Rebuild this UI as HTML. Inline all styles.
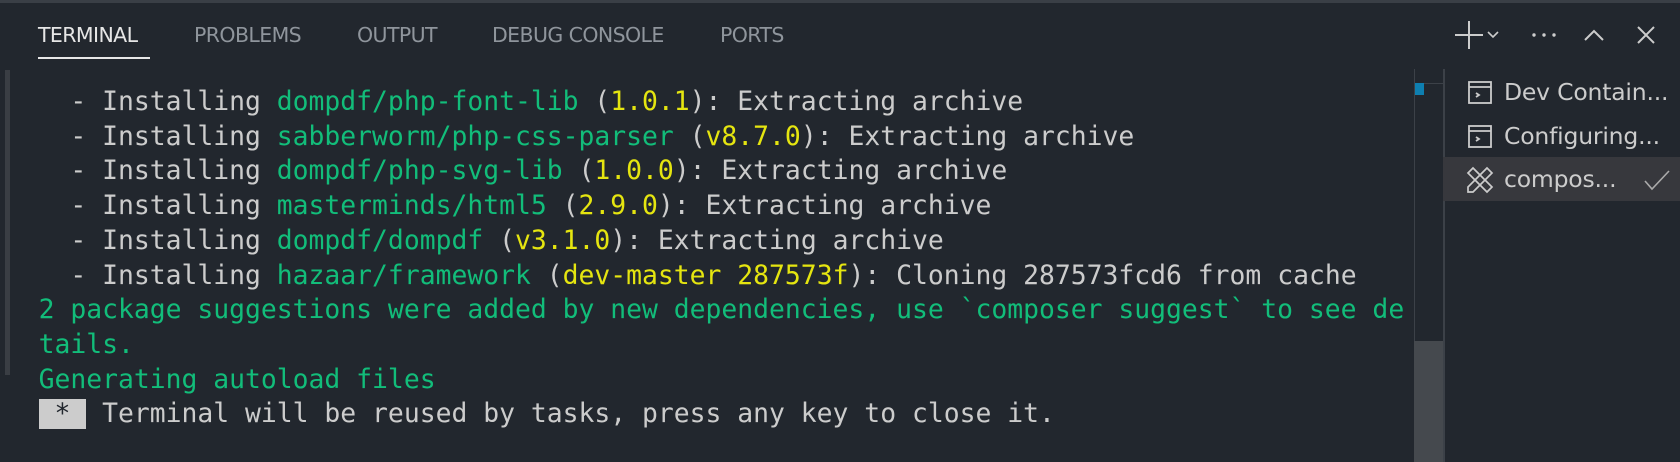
<!DOCTYPE html>
<html><head><style>
body{margin:0;width:1680px;height:462px;background:#22272e;overflow:hidden;position:relative;font-family:"Liberation Sans",sans-serif}
.top{position:absolute;left:0;top:0;width:1680px;height:3px;background:#3a3f46}
.tab{position:absolute;top:23px;font-family:"DejaVu Sans",sans-serif;font-size:20.5px;color:#8f959c;letter-spacing:-0.6px}
.act{color:#e6e6e6}
.ul{position:absolute;left:38px;top:57px;width:112px;height:2px;background:#e6e6e6}
.term{position:absolute;left:38.6px;top:85px;font-family:"DejaVu Sans Mono",monospace;font-size:26.38px;line-height:34.7px;color:#cccccc;white-space:pre}
.g{color:#12bd7a}.y{color:#e5e510}
.star{background:#cccccc;color:#22272e}
.lbar{position:absolute;left:5px;top:70px;width:5px;height:305px;background:#3a3e44}
.sb{position:absolute;left:1414px;top:69px;width:28px;height:393px;border-left:1px solid #3c4148;border-right:2px solid #3c4148}
.thumb{position:absolute;left:1414px;top:341px;width:29px;height:121px;background:#45494e}
.side{position:absolute;left:1443px;width:237px;height:44px;font-family:"DejaVu Sans",sans-serif;font-size:23.5px;color:#cccccc;line-height:44px;letter-spacing:-0.2px}
.side span{position:absolute;left:61px}
</style></head><body>
<div class="top"></div>
<div class="tab act" style="left:38px">TERMINAL</div>
<div class="tab" style="left:194px">PROBLEMS</div>
<div class="tab" style="left:357px">OUTPUT</div>
<div class="tab" style="left:492px">DEBUG CONSOLE</div>
<div class="tab" style="left:720px">PORTS</div>
<div class="ul"></div>
<svg style="position:absolute;left:1450px;top:18px" width="220" height="36" viewBox="0 0 220 36" fill="none" stroke="#cccccc" stroke-width="2">
<path d="M19 3V31M5 17H33"/>
<path d="M38 14l5 5 5-5" stroke-width="1.6"/>
<circle cx="84" cy="17" r="1.7" fill="#ccc" stroke="none"/><circle cx="94" cy="17" r="1.7" fill="#ccc" stroke="none"/><circle cx="104" cy="17" r="1.7" fill="#ccc" stroke="none"/>
<path d="M135 22l9-9 9 9"/>
<path d="M188 9l16 16M204 9l-16 16"/>
</svg>
<div class="lbar"></div>
<div class="sb"></div>
<div style="position:absolute;left:1415px;top:83px;width:28px;height:1px;background:#3c4148"></div>
<div style="position:absolute;left:1415px;top:83px;width:9px;height:12px;background:#0e7fb0"></div>
<div class="thumb"></div>
<div class="term">  - Installing <span class="g">dompdf/php-font-lib</span> (<span class="y">1.0.1</span>): Extracting archive
  - Installing <span class="g">sabberworm/php-css-parser</span> (<span class="y">v8.7.0</span>): Extracting archive
  - Installing <span class="g">dompdf/php-svg-lib</span> (<span class="y">1.0.0</span>): Extracting archive
  - Installing <span class="g">masterminds/html5</span> (<span class="y">2.9.0</span>): Extracting archive
  - Installing <span class="g">dompdf/dompdf</span> (<span class="y">v3.1.0</span>): Extracting archive
  - Installing <span class="g">hazaar/framework</span> (<span class="y">dev-master 287573f</span>): Cloning 287573fcd6 from cache
<span class="g">2 package suggestions were added by new dependencies, use `composer suggest` to see de
tails.
Generating autoload files</span>
<span class="star"> * </span> Terminal will be reused by tasks, press any key to close it.</div>
<div class="side" style="top:70px"><svg style="position:absolute;left:25px;top:11px" width="24" height="23" fill="none" stroke="#ccc" stroke-width="1.8"><rect x="1" y="1" width="22" height="21"/><path d="M1 6H23M8 12l3 2-3 2"/></svg><span>Dev Contain...</span></div>
<div class="side" style="top:114px"><svg style="position:absolute;left:25px;top:11px" width="24" height="23" fill="none" stroke="#ccc" stroke-width="1.8"><rect x="1" y="1" width="22" height="21"/><path d="M1 6H23M8 12l3 2-3 2"/></svg><span>Configuring...</span></div>
<div class="side" style="top:157px;background:#37383d"><svg style="position:absolute;left:22px;top:8px" width="30" height="30" fill="none" stroke="#ccc" stroke-width="1.7"><path d="M3 8l5-5 19 19-5 5z M3 22L22 3l5 5L8 27H3z M12 17l2 2M17 12l2 2"/></svg><span>compos...</span><svg style="position:absolute;left:201px;top:12px" width="26" height="22" fill="none" stroke="#aaa" stroke-width="1.6"><path d="M1 12l7 8L25 2"/></svg></div>
</body></html>
